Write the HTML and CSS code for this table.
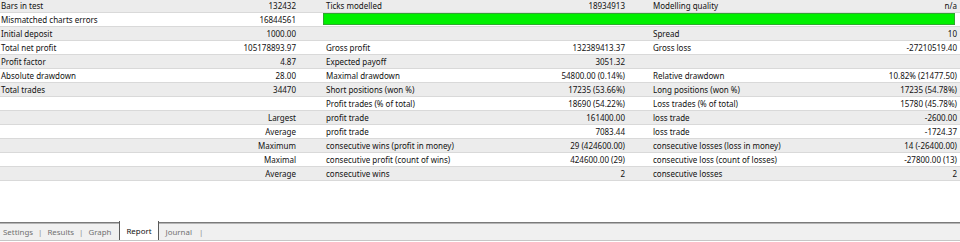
FILE: index.html
```html
<!DOCTYPE html>
<html>
<head>
<meta charset="utf-8">
<link rel="stylesheet" href="styles.css">
</head>
<body>
<div class="page">
  <div class="report">
    <div class="row odd first">
      <div class="lbl">Bars in test</div><div class="val">132432</div>
      <div class="lbl2">Ticks modelled</div><div class="val2">18934913</div>
      <div class="lbl3">Modelling quality</div><div class="val3">n/a</div>
    </div>
    <div class="row even">
      <div class="lbl">Mismatched charts errors</div><div class="val">16844561</div>
      <div class="bar-cell"><div class="quality-bar"></div></div>
    </div>
    <div class="row odd">
      <div class="lbl">Initial deposit</div><div class="val">1000.00</div>
      <div class="lbl2"></div><div class="val2"></div>
      <div class="lbl3">Spread</div><div class="val3">10</div>
    </div>
    <div class="row even">
      <div class="lbl">Total net profit</div><div class="val">105178893.97</div>
      <div class="lbl2">Gross profit</div><div class="val2">132389413.37</div>
      <div class="lbl3">Gross loss</div><div class="val3">-27210519.40</div>
    </div>
    <div class="row odd">
      <div class="lbl">Profit factor</div><div class="val">4.87</div>
      <div class="lbl2">Expected payoff</div><div class="val2">3051.32</div>
      <div class="lbl3"></div><div class="val3"></div>
    </div>
    <div class="row even">
      <div class="lbl">Absolute drawdown</div><div class="val">28.00</div>
      <div class="lbl2">Maximal drawdown</div><div class="val2">54800.00 (0.14%)</div>
      <div class="lbl3">Relative drawdown</div><div class="val3">10.82% (21477.50)</div>
    </div>
    <div class="row odd">
      <div class="lbl">Total trades</div><div class="val">34470</div>
      <div class="lbl2">Short positions (won %)</div><div class="val2">17235 (53.66%)</div>
      <div class="lbl3">Long positions (won %)</div><div class="val3">17235 (54.78%)</div>
    </div>
    <div class="row even">
      <div class="lbl"></div><div class="val"></div>
      <div class="lbl2">Profit trades (% of total)</div><div class="val2">18690 (54.22%)</div>
      <div class="lbl3">Loss trades (% of total)</div><div class="val3">15780 (45.78%)</div>
    </div>
    <div class="row odd">
      <div class="lbl"></div><div class="val">Largest</div>
      <div class="lbl2">profit trade</div><div class="val2">161400.00</div>
      <div class="lbl3">loss trade</div><div class="val3">-2600.00</div>
    </div>
    <div class="row even">
      <div class="lbl"></div><div class="val">Average</div>
      <div class="lbl2">profit trade</div><div class="val2">7083.44</div>
      <div class="lbl3">loss trade</div><div class="val3">-1724.37</div>
    </div>
    <div class="row odd">
      <div class="lbl"></div><div class="val">Maximum</div>
      <div class="lbl2">consecutive wins (profit in money)</div><div class="val2">29 (424600.00)</div>
      <div class="lbl3">consecutive losses (loss in money)</div><div class="val3">14 (-26400.00)</div>
    </div>
    <div class="row even">
      <div class="lbl"></div><div class="val">Maximal</div>
      <div class="lbl2">consecutive profit (count of wins)</div><div class="val2">424600.00 (29)</div>
      <div class="lbl3">consecutive loss (count of losses)</div><div class="val3">-27800.00 (13)</div>
    </div>
    <div class="row odd">
      <div class="lbl"></div><div class="val">Average</div>
      <div class="lbl2">consecutive wins</div><div class="val2">2</div>
      <div class="lbl3">consecutive losses</div><div class="val3">2</div>
    </div>
  </div>
  <div class="tabbar">
    <span class="tab first-tab">Settings</span><span class="sep">|</span>
    <span class="tab">Results</span><span class="sep">|</span>
    <span class="tab before-active">Graph</span>
    <span class="tab active">Report</span>
    <span class="tab after-active">Journal</span><span class="sep">|</span>
  </div>
</div>
</body>
</html>
```
FILE: styles.css
```css
html, body {
  margin: 0;
  padding: 0;
  background: #ffffff;
}
body {
  font-family: "Noto Sans", "Open Sans", sans-serif;
  font-size: 8px;
  color: #111111;
}
.page {
  width: 960px;
  height: 242px;
  display: flex;
  flex-direction: column;
  overflow: hidden;
}
.report {
  flex: 1;
  margin-top: -1px;
}
.row {
  display: grid;
  grid-template-columns: 200px 123px 200px 127px 200px 110px;
  height: 14px;
  box-sizing: border-box;
  border-bottom: 1px solid #d9d9d9;
  line-height: 13px;
  white-space: nowrap;
}
.row.odd { background: #ececec; }
.row.even { background: #ffffff; }
.lbl { padding-left: 1px; }
.val { text-align: right; padding-right: 27px; }
.lbl2 { padding-left: 3px; }
.val2 { text-align: right; padding-right: 25px; }
.lbl3 { padding-left: 3px; }
.val3 { text-align: right; padding-right: 3px; }
.bar-cell {
  grid-column: 3 / 7;
  padding: 0 5px 0 0;
  display: flex;
  align-items: flex-start;
}
.quality-bar {
  width: 100%;
  height: 12px;
  box-sizing: border-box;
  background: #00f000;
  border: 1px solid #2fa82f;
}
.tabbar {
  height: 19px;
  box-sizing: border-box;
  border-top: 1px solid #7a7a7a;
  box-shadow: inset 0 1px 0 #b4b4b4;
  border-bottom: 1px solid #c6c6c6;
  background: #f0f0f0;
  display: flex;
  align-items: stretch;
  font-size: 7.9px;
  color: #707070;
  margin-bottom: 1px;
}
.tab {
  display: flex;
  align-items: center;
  padding: 0 5px;
}
.tab.first-tab { padding-left: 3px; }
.tab.before-active { padding-right: 8px; }
.tab.after-active { padding: 0 7px; }
.sep {
  display: flex;
  align-items: center;
  color: #8a8a8a;
}
.tab.active {
  background: #ffffff;
  color: #111111;
  border-left: 1px solid #5a5a5a;
  border-right: 1px solid #5a5a5a;
  margin-top: -2px;
  padding: 0 6px;
}
```
